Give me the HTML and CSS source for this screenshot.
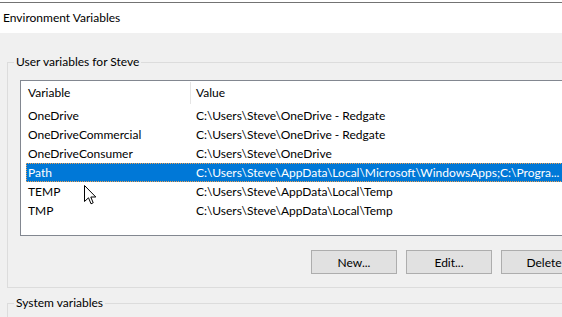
FILE: index.html
```html
<!DOCTYPE html>
<html>
<head>
    <title>Environment Variables</title>
    <link rel="stylesheet" href="styles.css">
</head>
<body>

<div class="frame">
    <div class="titlebar">Environment Variables</div>
</div>

<div class="dialog">
    <fieldset class="group">
        <legend>User variables for Steve</legend>

        <div class="list">
            <div class="row head">
                <div class="col-name">Variable</div>
                <div class="col-value">Value</div>
            </div>
            <div class="row">
                <div class="col-name">OneDrive</div>
                <div class="col-value">C:\Users\Steve\OneDrive - Redgate</div>
            </div>
            <div class="row">
                <div class="col-name">OneDriveCommercial</div>
                <div class="col-value">C:\Users\Steve\OneDrive - Redgate</div>
            </div>
            <div class="row">
                <div class="col-name">OneDriveConsumer</div>
                <div class="col-value">C:\Users\Steve\OneDrive</div>
            </div>
            <div class="row selected">
                <div class="col-name">Path</div>
                <div class="col-value">C:\Users\Steve\AppData\Local\Microsoft\WindowsApps;C:\Progra...</div>
            </div>
            <div class="row">
                <div class="col-name">TEMP</div>
                <div class="col-value">C:\Users\Steve\AppData\Local\Temp</div>
            </div>
            <div class="row">
                <div class="col-name">TMP</div>
                <div class="col-value">C:\Users\Steve\AppData\Local\Temp</div>
            </div>
        </div>

        <div class="buttons">
            <button class="btn">New...</button>
            <button class="btn">Edit...</button>
            <button class="btn">Delete</button>
        </div>
    </fieldset>

    <fieldset class="group system">
        <legend>System variables</legend>
    </fieldset>
</div>

<svg class="cursor" width="13" height="20" viewBox="0 0 13 20">
    <path d="M0.5 0.5 L0.5 16.5 L4.5 12.8 L7 18.8 L9.2 17.8 L6.8 12 L11.8 12 Z" fill="#fff" stroke="#000" stroke-width="1" stroke-linejoin="miter"/>
</svg>

</body>
</html>
```

FILE: styles.css
```css
html, body {
    margin: 0;
    padding: 0;
}
body {
    position: relative;
    width: 562px;
    height: 317px;
    overflow: hidden;
    background: #f0f0f0;
    font-family: Lato, "Noto Sans", "Liberation Sans", sans-serif;
    font-size: 12px;
    color: #000;
}

.frame {
    background: #fff;
    padding-top: 2px;
}
.titlebar {
    height: 30px;
    line-height: 30px;
    padding-left: 3px;
    border-top: 1px solid #737373;
    background: #fff;
}

.dialog {
    padding-left: 7px;
}

.group {
    margin: 21px -40px 0 0;
    padding: 0 0 13px 12px;
    border: 1px solid #dcdcdc;
    min-width: 0;
}
.group legend {
    margin-left: -6px;
    padding: 0 2px;
    line-height: 16px;
}
.group.system {
    margin-top: 7px;
    height: 30px;
}

.list {
    height: 154px;
    margin-top: 10px;
    padding-left: 5px;
    background: #fff;
    border: 1px solid #828790;
    border-right: none;
    overflow: hidden;
}
.row {
    display: flex;
    height: 19px;
    line-height: 19px;
    white-space: nowrap;
}
.row.head {
    height: 25px;
    line-height: 24px;
}
.col-name {
    flex: none;
    width: 164px;
    padding-left: 2px;
    box-sizing: border-box;
}
.col-value {
    padding-left: 6px;
}
.head .col-value {
    border-left: 1px solid #e5e5e5;
    height: 22px;
    margin-top: 1px;
    line-height: 22px;
    padding-left: 5px;
}
.row.selected {
    background: #0078d7;
    color: #fff;
    outline: 1px dotted #f0a050;
    outline-offset: -1px;
}

.buttons {
    display: flex;
    gap: 9px;
    margin-top: 14px;
    padding-left: 291px;
}
.btn {
    flex: none;
    width: 86px;
    height: 24px;
    padding: 0;
    font-family: inherit;
    font-size: 12px;
    color: #000;
    background: #e1e1e1;
    border: 1px solid #adadad;
}

.cursor {
    position: absolute;
    left: 84px;
    top: 185px;
}
```
